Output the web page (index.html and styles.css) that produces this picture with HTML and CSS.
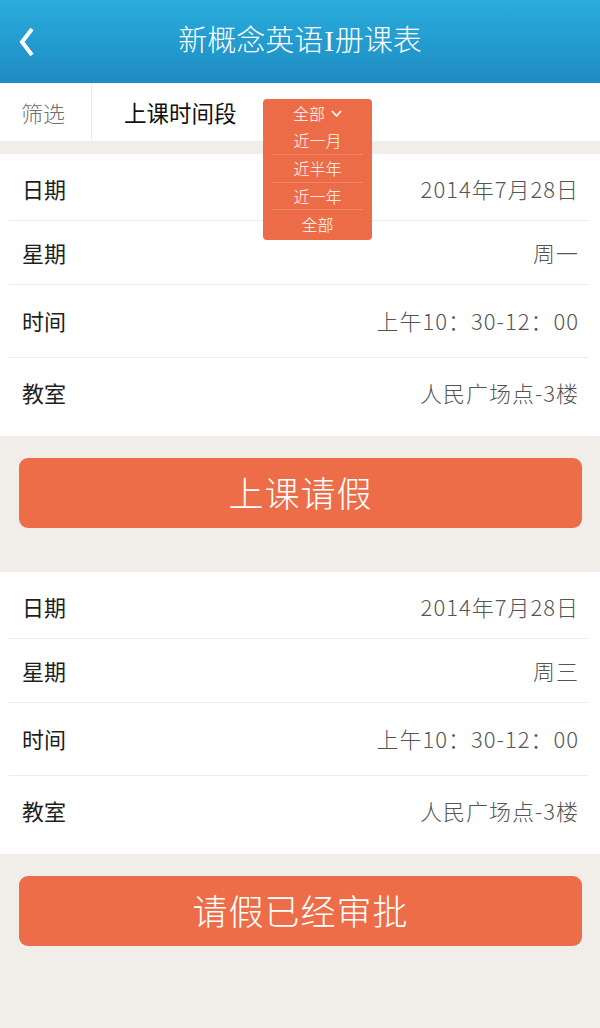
FILE: index.html
```html
<!DOCTYPE html>
<html lang="zh-CN">
<head>
<meta charset="utf-8">
<title>新概念英语I册课表</title>
<link rel="stylesheet" href="styles.css">
</head>
<body>
<div class="page">
  <header class="topbar">
    <div class="back">
      <svg width="20" height="32" viewBox="0 0 20 32"><path d="M15 3 L5 16 L15 29" fill="none" stroke="#fff" stroke-width="4" stroke-linecap="butt" stroke-linejoin="miter"/></svg>
    </div>
    <h1 class="title">新概念英语<span class="roman">I</span>册课表</h1>
    <div class="spacer"></div>
  </header>

  <div class="filter">
    <div class="filter-label">筛选</div>
    <div class="filter-field">上课时间段</div>
    <div class="dropdown">
      <div class="dd-item dd-current">全部<svg class="caret" width="11" height="7" viewBox="0 0 11 7"><path d="M1 1 L5.5 6 L10 1" fill="none" stroke="#fff" stroke-width="1.6"/></svg></div>
      <div class="dd-item">近一月</div>
      <div class="dd-item dd-sep">近半年</div>
      <div class="dd-item dd-sep">近一年</div>
      <div class="dd-item dd-sep">全部</div>
    </div>
  </div>

  <section class="card first">
    <div class="row r1"><span class="label">日期</span><span class="value">2014年7月28日</span></div>
    <div class="row r2"><span class="label">星期</span><span class="value">周一</span></div>
    <div class="row r3"><span class="label">时间</span><span class="value">上午10：30-12：00</span></div>
    <div class="row r4"><span class="label">教室</span><span class="value">人民广场点-3楼</span></div>
  </section>
  <div class="action"><button class="btn">上课请假</button></div>

  <section class="card second">
    <div class="row r1"><span class="label">日期</span><span class="value">2014年7月28日</span></div>
    <div class="row r2"><span class="label">星期</span><span class="value">周三</span></div>
    <div class="row r3"><span class="label">时间</span><span class="value">上午10：30-12：00</span></div>
    <div class="row r4"><span class="label">教室</span><span class="value">人民广场点-3楼</span></div>
  </section>
  <div class="action"><button class="btn">请假已经审批</button></div>
</div>
</body>
</html>
```
FILE: styles.css
```css
* { box-sizing: border-box; }
html, body { margin: 0; padding: 0; }
body {
  background: #f1ede9;
  font-family: "Noto Sans CJK SC", "Noto Sans", sans-serif;
  width: 600px;
  min-height: 1028px;
}
.page { position: relative; }

.topbar {
  height: 83px;
  background: linear-gradient(to bottom, #29acdc 0%, #2299cd 60%, #1e8bc1 100%);
  display: flex;
  align-items: center;
}
.back { width: 60px; display: flex; align-items: center; padding-left: 17px; }
.back svg { display: block; }
.spacer { width: 60px; }
.title {
  flex: 1;
  margin: 0;
  text-align: center;
  color: #fff;
  font-size: 29px;
  font-weight: 300;
  line-height: 1;
  padding-bottom: 4px;
}
.roman { font-family: "Liberation Serif", serif; font-weight: normal; padding: 0 1px; }

.filter {
  position: relative;
  height: 58px;
  background: #fff;
  display: flex;
  align-items: center;
  margin-bottom: 13px;
}
.filter-label {
  width: 92px;
  height: 100%;
  display: flex;
  align-items: center;
  padding-left: 21px;
  border-right: 1px solid #ececec;
  color: #6f6f6f;
  font-size: 22px;
  font-weight: 300;
}
.filter-field {
  padding-left: 32px;
  color: #111;
  font-size: 22.5px;
}
.dropdown {
  position: absolute;
  left: 263px;
  top: 16px;
  width: 109px;
  height: 141px;
  background: #ec6c47;
  border-radius: 4px;
  padding: 0 9px;
  z-index: 5;
}
.dd-item {
  height: 27.6px;
  display: flex;
  align-items: center;
  justify-content: center;
  color: #fff;
  font-size: 16px;
  font-weight: 300;
  line-height: 1;
}
.dd-sep { border-top: 1px solid rgba(255, 255, 255, 0.18); }
.dd-current { gap: 6px; padding-top: 1px; }
.caret { display: block; }

.card {
  background: #fff;
  padding: 0 12px 0 9px;
}
.row {
  display: flex;
  align-items: center;
  justify-content: space-between;
  padding: 0 9px 0 13px;
  border-bottom: 1px solid #ececec;
  font-size: 22px;
}
.row.r1 { height: 67px; padding-top: 2px; }
.row.r2 { height: 64px; padding-bottom: 2px; }
.row.r3 { height: 73px; padding-bottom: 3px; }
.row.r4 { height: 78px; border-bottom: none; padding-bottom: 10px; }
.label { color: #1e1e1e; }
.value { color: #555; letter-spacing: 1px; font-weight: 300; }

.action { padding: 22px 18px 44px 19px; }
.btn {
  display: block;
  width: 100%;
  height: 70px;
  border: none;
  border-radius: 9px;
  background: #ec6d48;
  color: #fff;
  font-family: "Noto Sans CJK SC", "Noto Sans", sans-serif;
  font-size: 35px;
  font-weight: 300;
  letter-spacing: 1px;
  padding: 0 0 3px 0;
}
```
